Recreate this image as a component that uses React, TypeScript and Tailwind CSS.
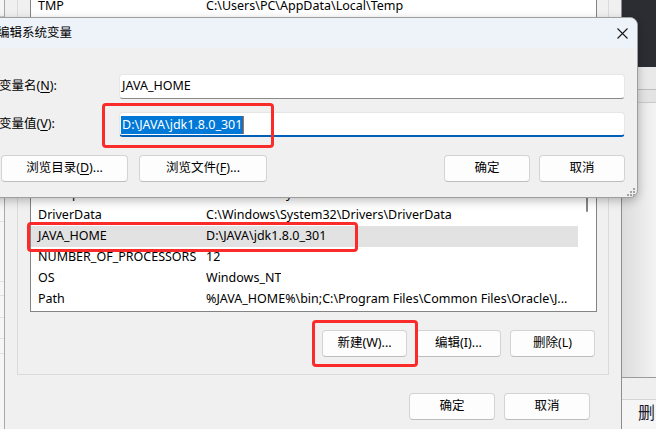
import type { ReactNode } from 'react';

type Variable = { name: string; value: string; selected?: boolean };

const systemVars: Variable[] = [
  { name: 'ComSpec', value: 'C:\\Windows\\system32\\cmd.exe' },
  { name: 'DriverData', value: 'C:\\Windows\\System32\\Drivers\\DriverData' },
  { name: 'JAVA_HOME', value: 'D:\\JAVA\\jdk1.8.0_301', selected: true },
  { name: 'NUMBER_OF_PROCESSORS', value: '12' },
  { name: 'OS', value: 'Windows_NT' },
  { name: 'Path', value: '%JAVA_HOME%\\bin;C:\\Program Files\\Common Files\\Oracle\\J...' },
];

function Key({ children }: { children: ReactNode }) {
  return <span className="underline underline-offset-[2px]">{children}</span>;
}

function WinButton({ children, className = '' }: { children: ReactNode; className?: string }) {
  return (
    <div
      className={`flex h-[27px] shrink-0 items-center justify-center rounded-[4px] border border-[#d3d3d3] border-b-[#bdbdbd] bg-[#fdfdfd] ${className}`}
    >
      {children}
    </div>
  );
}

function ListRow({ name, value, selected = false }: Variable) {
  return (
    <div className={`flex h-[21px] items-center whitespace-nowrap ${selected ? 'bg-[#e2e2e2]' : ''}`}>
      <span className="w-[175px] shrink-0 pl-[7px]">{name}</span>
      <span className="overflow-hidden">{value}</span>
    </div>
  );
}

// 红框标注
function Mark({ className }: { className: string }) {
  return <div className={`absolute rounded-[4px] border-[3px] border-[#fa2b2b] ${className}`} />;
}

function LeftStrip() {
  return (
    <div className="flex w-[17px] shrink-0">
      <div className="flex w-[5px] flex-col border-r border-[#a9a9a9] bg-[#f6f6f6]">
        <div className="h-[17px] border-b border-[#cfcfcf]" />
        <div className="h-[205px] border-b border-[#e0e0e0]" />
        <div className="h-[60px] border-b border-[#e0e0e0]" />
        <div className="h-[14px] border-b border-[#e0e0e0]" />
        <div className="h-[22px] border-b border-[#e0e0e0]" />
        <div className="h-[21px] border-b border-[#e0e0e0]" />
        <div className="h-[15px] border-b border-[#e0e0e0]" />
      </div>
      <div className="flex-1" />
    </div>
  );
}

function RightStrip() {
  return (
    <div className="flex flex-1 flex-col border-l border-[#8d8d8d]">
      <div className="h-[67px] bg-[#2b2d32]" />
      <div className="h-[23px] border-b border-[#bdbdbd] bg-[#e9e9e9]" />
      <div className="h-[13px] border-b border-[#c9c9c9] bg-[#e3e3e3]" />
      <div className="h-[274px] bg-gradient-to-r from-[#dcdcdc] to-[#f3f3f3]" />
      <div className="h-[22px] border-t border-[#9a9a9a] bg-[#efefef]" />
      <div className="flex-1 border-t border-[#d4d4d4] bg-[#f5f5f5] pl-[16px] text-[17px] leading-[26px] text-[#1a1a2e]">
        删
      </div>
    </div>
  );
}

function EditDialog() {
  return (
    <div className="absolute left-[-12px] top-[17px] flex h-[181px] w-[650px] flex-col overflow-hidden rounded-r-[8px] border border-[#9e9e9e] bg-[#f0f0f0] shadow-[0_3px_10px_rgba(0,0,0,0.25)]">
      <div className="flex h-[30px] shrink-0 items-center bg-[#eef3f9] pl-[8px]">
        <span>编辑系统变量</span>
        <div className="ml-auto flex w-[30px] justify-center">
          <svg width="11" height="11" viewBox="0 0 11 11" fill="none" stroke="#1a1a1a" strokeWidth="1.1">
            <path d="M0.5 0.5L10.5 10.5M10.5 0.5L0.5 10.5" />
          </svg>
        </div>
      </div>

      <div className="flex flex-1 flex-col pl-[10px] pr-[12px] pt-[26px]">
        <div className="flex h-[25px] items-center">
          <span className="w-[120px] shrink-0">
            变量名(<Key>N</Key>):
          </span>
          <div className="flex h-[25px] flex-1 items-center rounded-[4px] border border-[#e6e6e6] border-b-[#8a8a8a] bg-white pl-[2px]">
            JAVA_HOME
          </div>
        </div>

        <div className="mt-[13px] flex h-[25px] items-center">
          <span className="w-[120px] shrink-0">
            变量值(<Key>V</Key>):
          </span>
          <div className="flex h-[25px] flex-1 items-center rounded-[4px] border border-[#e6e6e6] border-b-2 border-b-[#005fb8] bg-white pl-[1px] pt-[1px]">
            <span className="bg-[#0078d7] px-[1px] leading-[18px] text-white">D:\JAVA\jdk1.8.0_301</span>
            <span className="h-[18px] w-[1px] bg-[#d2691e]" />
          </div>
        </div>

        <div className="mt-[18px] flex items-center pl-[2px]">
          <WinButton className="w-[127px]">
            浏览目录(<Key>D</Key>)...
          </WinButton>
          <WinButton className="ml-[11px] w-[128px]">
            浏览文件(<Key>F</Key>)...
          </WinButton>
          <WinButton className="ml-auto w-[86px] border-[#0067c0] border-b-[#0067c0]">确定</WinButton>
          <WinButton className="ml-[9px] w-[86px]">取消</WinButton>
        </div>
      </div>

      <svg className="absolute bottom-[1px] right-[2px]" width="9" height="9" viewBox="0 0 9 9" fill="#a3a3a3">
        <rect x="7" y="1" width="2" height="2" />
        <rect x="4" y="4" width="2" height="2" />
        <rect x="7" y="4" width="2" height="2" />
        <rect x="1" y="7" width="2" height="2" />
        <rect x="4" y="7" width="2" height="2" />
        <rect x="7" y="7" width="2" height="2" />
      </svg>
    </div>
  );
}

export default function App() {
  return (
    <div className="relative h-[429px] w-[656px] overflow-hidden bg-[#f0f0f0] font-['Noto_Sans','Noto_Sans_CJK_SC',sans-serif] text-[12.5px] text-black">
      <div className="flex h-full">
        <LeftStrip />

        <div className="flex w-[604px] shrink-0 flex-col">
          {/* 系统变量分组框 */}
          <div className="flex w-[592px] flex-col border-x border-b border-[#dadada] pb-[17px] pl-[12px] pr-[11px]">
            <div className="flex h-[18px] items-end overflow-hidden border-x border-b border-[#848484] bg-white">
              <div className="w-[547px] shrink-0">
                <ListRow name="TMP" value={'C:\\Users\\PC\\AppData\\Local\\Temp'} />
              </div>
            </div>

            <div className="h-[165px]" />

            <div className="flex border border-[#848484] bg-white">
              <div className="w-[547px] shrink-0 pb-[1px]">
                {systemVars.map((v) => (
                  <ListRow key={v.name} {...v} />
                ))}
              </div>
              <div className="flex-1 pl-[8px] pt-[6px]">
                <div className="h-[22px] w-[2px] rounded-full bg-[#868686]" />
              </div>
            </div>

            <div className="mt-[18px] flex justify-end gap-[9px] pr-[2px]">
              <WinButton className="w-[85px]">新建(W)...</WinButton>
              <WinButton className="w-[85px]">编辑(I)...</WinButton>
              <WinButton className="w-[85px]">删除(L)</WinButton>
            </div>
          </div>

          <div className="mt-[18px] flex justify-end gap-[9px] pr-[31px]">
            <WinButton className="w-[86px]">确定</WinButton>
            <WinButton className="w-[86px]">取消</WinButton>
          </div>
        </div>

        <RightStrip />
      </div>

      <EditDialog />

      <Mark className="left-[102px] top-[103px] h-[45px] w-[172px]" />
      <Mark className="left-[27px] top-[222px] h-[30px] w-[331px]" />
      <Mark className="left-[312px] top-[320px] h-[47px] w-[106px]" />
    </div>
  );
}
